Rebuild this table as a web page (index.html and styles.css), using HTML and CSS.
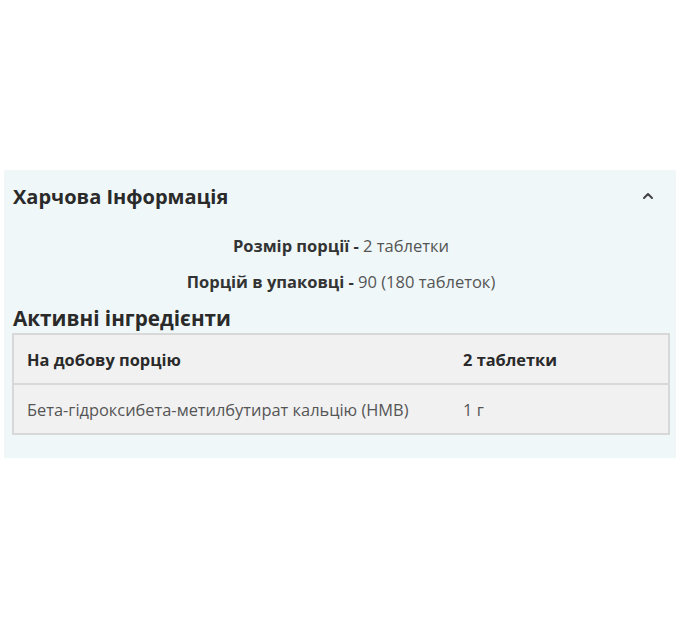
FILE: index.html
```html
<!DOCTYPE html>
<html lang="uk">
<head>
<meta charset="utf-8">
<link rel="stylesheet" href="styles.css">
</head>
<body>
<section class="panel">
  <div class="panel-head">
    <h2 class="panel-title">Харчова Інформація</h2>
    <svg class="chevron" width="12" height="8" viewBox="0 0 12 8"><path d="M2 6 L6 2 L10 6" fill="none" stroke="#444" stroke-width="2" stroke-linecap="round" stroke-linejoin="round"/></svg>
  </div>
  <div class="serving">
    <p class="serving-line"><b>Розмір порції -</b> 2 таблетки</p>
    <p class="serving-line"><b>Порцій в упаковці -</b> 90 (180 таблеток)</p>
  </div>
  <h3 class="section-title">Активні інгредієнти</h3>
  <table class="ing">
    <thead>
      <tr><th class="c1">На добову порцію</th><th class="c2">2 таблетки</th></tr>
    </thead>
    <tbody>
      <tr><td class="c1">Бета-гідроксибета-метилбутират кальцію (HMB)</td><td class="c2">1 г</td></tr>
    </tbody>
  </table>
</section>
</body>
</html>
```
FILE: styles.css
```css
html, body { margin: 0; padding: 0; background: #fff; }
body { font-family: "Open Sans", "Noto Sans", sans-serif; color: #333; }
.panel {
  margin: 170px 4px 0;
  background: #eff7f8;
  padding: 0 6px 23px 8px;
}
.panel-head {
  display: flex;
  align-items: center;
  justify-content: space-between;
  height: 52px;
  padding-left: 1px;
}
.panel-title { margin: 0; font-size: 20px; font-weight: 700; color: #2a2a2a; }
.chevron { margin-right: 16px; }
.serving { text-align: center; padding-top: 14px; }
.serving-line { margin: 0 0 16px; font-size: 16.5px; line-height: 20px; color: #555; }
.serving-line b { color: #333; font-weight: 700; }
.section-title { margin: -3px 0 0 1px; font-size: 20.7px; font-weight: 700; color: #2a2a2a; line-height: 26px; }
.ing {
  width: 100%;
  margin-top: 2px;
  border-collapse: collapse;
  table-layout: fixed;
  background: #f1f1f1;
  border: 2px solid #d8d8d8;
  font-size: 16.4px;
}
.ing th, .ing td { text-align: left; padding: 0 13px; height: 48px; }
.ing th { font-weight: 700; color: #2a2a2a; }
.ing td { color: #555; border-top: 2px solid #d8d8d8; }
.ing .c1 { width: 410px; }
```
